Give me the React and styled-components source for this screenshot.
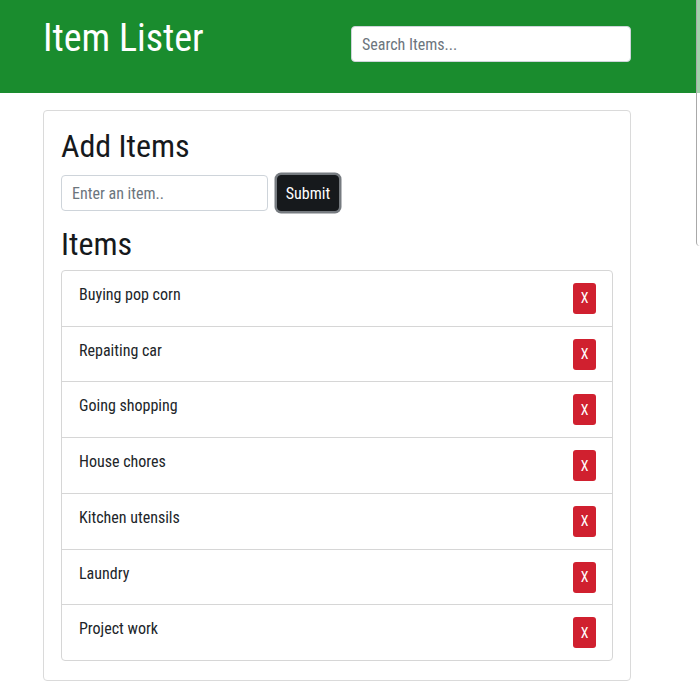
import React from 'react'
import styled, { createGlobalStyle } from 'styled-components'

const GlobalStyle = createGlobalStyle`
  body {
    margin: 0;
    background: #fff;
    font-family: Roboto, "Liberation Sans", sans-serif;
    font-stretch: 85%;
    color: #212529;
  }
  * { box-sizing: border-box; }
`

const Header = styled.header`
  background: #1a8c2e;
  height: 93px;
`

const HeaderInner = styled.div`
  width: 588px;
  margin-left: 43px;
  display: flex;
  justify-content: space-between;
  align-items: flex-start;
`

const Title = styled.h1`
  margin: 16px 0 0;
  font-size: 38px;
  font-weight: 400;
  line-height: 1.2;
  color: #fff;
`

const SearchInput = styled.input`
  margin-top: 26px;
  width: 280px;
  height: 36px;
  padding: 6px 10px;
  font: inherit;
  font-size: 16px;
  border: 1px solid #ced4da;
  border-radius: 4px;
  outline: none;
  &::placeholder { color: #6c757d; }
`

const Card = styled.main`
  width: 588px;
  margin: 17px 0 0 43px;
  border: 1px solid #dadada;
  border-radius: 4px;
  padding: 16px 17px 19px;
`

const Heading = styled.h2`
  margin: 0 0 ${p => p.$gap}px;
  font-size: 32px;
  font-weight: 400;
  line-height: 1.2;
  color: #16191c;
`

const AddForm = styled.form`
  display: flex;
  align-items: center;
  gap: 9px;
  margin-bottom: 14px;
`

const ItemInput = styled.input`
  width: 207px;
  height: 36px;
  padding: 6px 10px;
  font: inherit;
  font-size: 16px;
  border: 1px solid #ced4da;
  border-radius: 4px;
  outline: none;
  &::placeholder { color: #6c757d; }
`

const SubmitBtn = styled.button`
  width: 62px;
  height: 36px;
  background: #16191c;
  color: #fff;
  font: inherit;
  font-size: 16px;
  border: 1px solid #16191c;
  border-radius: 4px;
  box-shadow: 0 0 0 2.5px #767b80;
  cursor: pointer;
`

const List = styled.ul`
  list-style: none;
  margin: 0;
  padding: 0;
  border: 1px solid #d6d6d6;
  border-radius: 4px;
`

const Row = styled.li`
  display: flex;
  justify-content: space-between;
  align-items: flex-start;
  height: 55.7px;
  padding: 12px 16px 0 17px;
  font-size: 16px;
  line-height: 24px;
  &:first-child { height: 55px; }
  & + & { border-top: 1px solid #d6d6d6; }
`

const DeleteBtn = styled.button`
  width: 23px;
  height: 31px;
  padding: 0;
  background: #d0202f;
  color: #fff;
  font: inherit;
  font-size: 14px;
  border: none;
  border-radius: 3px;
  cursor: pointer;
`

const EdgeStrip = styled.div`
  position: fixed;
  top: 0;
  right: 0;
  width: 4px;
  height: 246px;
  border-left: 1px solid #a9a9a9;
  border-bottom-left-radius: 6px;
  background: rgba(255, 255, 255, 0.6);
`

const items = [
  'Buying pop corn',
  'Repaiting car',
  'Going shopping',
  'House chores',
  'Kitchen utensils',
  'Laundry',
  'Project work',
]

const App = () => {
  return (
    <>
      <GlobalStyle />
      <Header>
        <HeaderInner>
          <Title>Item Lister</Title>
          <SearchInput placeholder="Search Items..." />
        </HeaderInner>
      </Header>
      <Card>
        <Heading $gap={10}>Add Items</Heading>
        <AddForm onSubmit={e => e.preventDefault()}>
          <ItemInput placeholder="Enter an item.." />
          <SubmitBtn type="submit">Submit</SubmitBtn>
        </AddForm>
        <Heading $gap={6}>Items</Heading>
        <List>
          {items.map(item => (
            <Row key={item}>
              {item}
              <DeleteBtn>X</DeleteBtn>
            </Row>
          ))}
        </List>
      </Card>
      <EdgeStrip />
    </>
  )
}

export default App
